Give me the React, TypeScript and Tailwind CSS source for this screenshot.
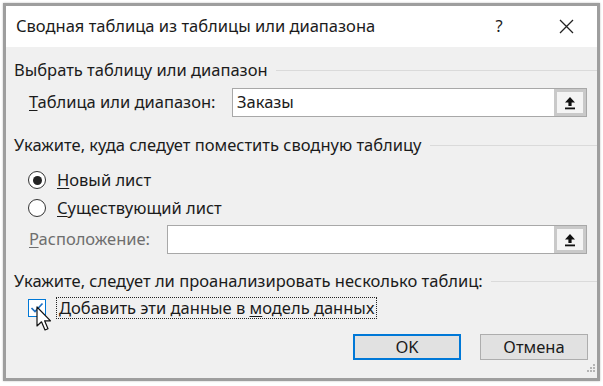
import React from "react";

const font = { fontFamily: '"Noto Sans", "Liberation Sans", sans-serif' };

const UploadIcon = () => (
  <svg width="12" height="14" viewBox="0 0 12 14">
    <path d="M6 1 L11 6.5 H7.6 V10 H4.4 V6.5 H1 Z" fill="#111" />
    <rect x="1" y="11.5" width="10" height="1.8" fill="#111" />
  </svg>
);

const SectionHeader = ({ text }: { text: string }) => (
  <div className="flex items-center gap-[8px] h-[24px]">
    <span className="whitespace-nowrap">{text}</span>
    <div className="flex-1 h-px bg-[#dadada]" />
  </div>
);

const RangeInput = ({ value }: { value?: string }) => (
  <div className="flex flex-1 h-[29px] border border-[#a8a8a8] bg-white">
    <div className="flex-1 flex items-center px-[4px]">{value}</div>
    <div className="w-[32px] flex items-center justify-center border-[3px] border-[#c9c9c9] bg-[#f4f4f4]">
      <UploadIcon />
    </div>
  </div>
);

const Radio = ({ checked, children }: { checked?: boolean; children: React.ReactNode }) => (
  <div className="flex items-center gap-[11px] h-[28px] pl-[14px]">
    <div className="w-[18px] h-[18px] rounded-full border-[1.5px] border-[#333] bg-white flex items-center justify-center">
      {checked && <div className="w-[9px] h-[9px] rounded-full bg-[#222]" />}
    </div>
    <span>{children}</span>
  </div>
);

// mouse pointer hovering over the checkbox
const Cursor = () => (
  <svg className="absolute left-[22px] top-[10px]" width="18" height="27" viewBox="0 0 18 27">
    <path
      d="M1 1 L1 20 L5.5 15.8 L9 24 L12 22.8 L8.6 14.8 L14.5 14.8 Z"
      fill="#fff"
      stroke="#111"
      strokeWidth="1.2"
      strokeLinejoin="round"
    />
  </svg>
);

export default function App() {
  return (
    <div className="w-[603px] h-[386px] bg-white pl-[3px] pt-[3px] text-[16.5px] text-[#1b1b1b]" style={font}>
      <div className="w-[597px] h-[378px] border-[3px] border-[#9e9e9e] flex flex-col bg-[#f0f0f0] shadow-[0_0_2px_rgba(0,0,0,0.25)]">
        {/* title bar */}
        <div className="h-[41px] bg-white flex items-center pl-[10px] shrink-0">
          <span className="flex-1">Сводная таблица из таблицы или диапазона</span>
          <span className="w-[60px] text-center mr-[6px]">?</span>
          <span className="w-[62px] flex justify-center">
            <svg width="15" height="15" viewBox="0 0 15 15">
              <path d="M1 1 L14 14 M14 1 L1 14" stroke="#222" strokeWidth="1.3" />
            </svg>
          </span>
        </div>

        {/* body */}
        <div className="flex flex-col pl-[8px] pt-[11px]">
          <SectionHeader text="Выбрать таблицу или диапазон" />
          <div className="flex items-center mt-[6px] pl-[15px] pr-[10px]">
            <span className="w-[203px]">
              <span className="underline underline-offset-2">Т</span>аблица или диапазон:
            </span>
            <RangeInput value="Заказы" />
          </div>

          <div className="mt-[16px]">
            <SectionHeader text="Укажите, куда следует поместить сводную таблицу" />
          </div>
          <div className="mt-[9px]">
            <Radio checked>
              <span className="underline underline-offset-2">Н</span>овый лист
            </Radio>
            <Radio>
              <span className="underline underline-offset-2">С</span>уществующий лист
            </Radio>
          </div>
          <div className="flex items-center mt-[3px] pl-[15px] pr-[10px]">
            <span className="w-[138px] text-[#6e6e6e]">
              <span className="underline underline-offset-2">Р</span>асположение:
            </span>
            <RangeInput />
          </div>

          <div className="mt-[15px]">
            <SectionHeader text="Укажите, следует ли проанализировать несколько таблиц:" />
          </div>
          <div className="relative flex items-center gap-[10px] mt-[3px] pl-[14px] h-[24px]">
            <div className="w-[18px] h-[18px] border border-[#0078d7] bg-white flex items-center justify-center">
              <svg width="14" height="12" viewBox="0 0 14 12">
                <path d="M1.5 6 L5 9.5 L12.5 1.5" fill="none" stroke="#1f6fc0" strokeWidth="1.7" />
              </svg>
            </div>
            <span className="border border-dotted border-[#222] px-[2px] leading-[20px]">
              Добавить эти данные в <span className="underline underline-offset-2">м</span>одель данных
            </span>
            <Cursor />
          </div>

          <div className="flex justify-end gap-[19px] pr-[9px] mt-[14px]">
            <button className="w-[108px] h-[26px] border-2 border-[#0078d7] bg-[#e1e1e1] flex items-center justify-center">
              OK
            </button>
            <button className="w-[108px] h-[26px] border border-[#adadad] bg-[#e1e1e1] flex items-center justify-center">
              Отмена
            </button>
          </div>
          <div className="flex justify-end pr-[2px] mt-[3px]">
            <svg width="9" height="9" viewBox="0 0 9 9">
              <g fill="#b5b5b5">
                <rect x="7" y="1" width="2" height="2" />
                <rect x="4" y="4" width="2" height="2" />
                <rect x="7" y="4" width="2" height="2" />
                <rect x="1" y="7" width="2" height="2" />
                <rect x="4" y="7" width="2" height="2" />
                <rect x="7" y="7" width="2" height="2" />
              </g>
            </svg>
          </div>
        </div>
      </div>
    </div>
  );
}
